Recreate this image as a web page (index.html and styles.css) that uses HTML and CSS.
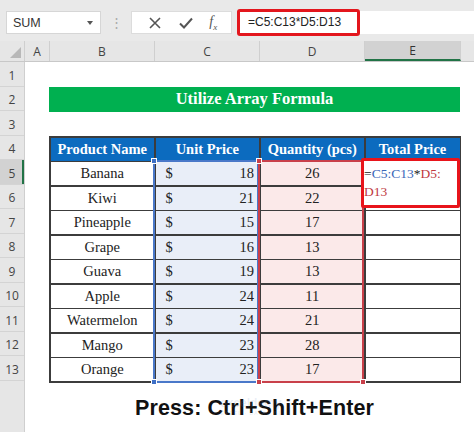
FILE: index.html
```html
<!DOCTYPE html>
<html>
<head>
<meta charset="utf-8">
<link rel="stylesheet" href="styles.css">
</head>
<body>
<div class="app">
  <div class="toolbar">
    <div class="namebox"><span>SUM</span><span class="caret"></span></div>
    <div class="dots">⋮</div>
    <div class="fxbox">
      <svg class="ico" width="14" height="14" viewBox="0 0 14 14"><path d="M2 2 L12 12 M12 2 L2 12" stroke="#555" stroke-width="1.6" fill="none"/></svg>
      <svg class="ico" width="16" height="14" viewBox="0 0 16 14"><path d="M2 7.5 L6 11.5 L14 2.5" stroke="#555" stroke-width="2" fill="none"/></svg>
      <span class="fx">f<sub>x</sub></span>
    </div>
    <div class="formula"><span class="ftext">=C5:C13*D5:D13</span></div>
  </div>
  <div class="colheads">
    <div class="corner"><span class="tri"></span></div>
    <div class="ch w-a">A</div>
    <div class="ch w-b">B</div>
    <div class="ch w-c">C</div>
    <div class="ch w-c">D</div>
    <div class="ch w-e sel">E</div>
    <div class="ch rest"></div>
  </div>
  <div class="body">
    <div class="rowheads">
      <div class="rh">1</div><div class="rh">2</div><div class="rh">3</div><div class="rh">4</div>
      <div class="rh sel">5</div><div class="rh">6</div><div class="rh">7</div><div class="rh">8</div>
      <div class="rh">9</div><div class="rh">10</div><div class="rh">11</div><div class="rh">12</div>
      <div class="rh">13</div><div class="rh-rest"></div>
    </div>
    <div class="cells">
      <div class="spacer"></div>
      <div class="title">Utilize Array Formula</div>
      <div class="spacer"></div>
      <div class="tablewrap">
        <div class="table">
          <div class="th">Product Name</div><div class="th">Unit Price</div><div class="th">Quantity (pcs)</div><div class="th">Total Price</div>

          <div class="td">Banana</div><div class="td c"><span>$</span><span>18</span></div><div class="td d">26</div><div class="td e"></div>
          <div class="td">Kiwi</div><div class="td c"><span>$</span><span>21</span></div><div class="td d">22</div><div class="td e"></div>
          <div class="td">Pineapple</div><div class="td c"><span>$</span><span>15</span></div><div class="td d">17</div><div class="td e"></div>
          <div class="td">Grape</div><div class="td c"><span>$</span><span>16</span></div><div class="td d">13</div><div class="td e"></div>
          <div class="td">Guava</div><div class="td c"><span>$</span><span>19</span></div><div class="td d">13</div><div class="td e"></div>
          <div class="td">Apple</div><div class="td c"><span>$</span><span>24</span></div><div class="td d">11</div><div class="td e"></div>
          <div class="td">Watermelon</div><div class="td c"><span>$</span><span>24</span></div><div class="td d">21</div><div class="td e"></div>
          <div class="td">Mango</div><div class="td c"><span>$</span><span>23</span></div><div class="td d">28</div><div class="td e"></div>
          <div class="td">Orange</div><div class="td c"><span>$</span><span>23</span></div><div class="td d">17</div><div class="td e"></div>
        </div>
        <div class="selbox blue"><i class="h tl"></i><i class="h bl"></i></div>
        <div class="selbox red"><i class="h tl"></i><i class="h bl"></i><i class="h br"></i></div>
        <div class="editbox"><span class="k">=</span><span class="b">C5:C13</span><span class="k">*</span><span class="r">D5:</span><br><span class="r">D13</span></div>
      </div>
      <div class="press">Press: Ctrl+Shift+Enter</div>
      <div class="watermark">exceldemy<small>EXCEL · DATA · BI</small></div>
    </div>
  </div>
</div>
</body>
</html>
```

FILE: styles.css
```css
* { box-sizing: border-box; }
html, body { margin: 0; padding: 0; }
body { width: 474px; height: 432px; overflow: hidden; background: #fff; font-family: "Liberation Sans", Arial, sans-serif; }
.app { width: 474px; height: 432px; display: flex; flex-direction: column; }

.toolbar { height: 41px; background: #e9e9e9; display: flex; align-items: flex-start; padding-top: 11px; padding-left: 6px; }
.namebox { width: 95px; height: 23px; background: #fff; border: 1px solid #d6d6d6; display: flex; align-items: center; justify-content: space-between; padding: 0 7px 0 6px; font-size: 12.5px; color: #333; }
.caret { width: 0; height: 0; border-left: 3.5px solid transparent; border-right: 3.5px solid transparent; border-top: 4px solid #555; }
.dots { width: 30px; text-align: center; color: #a8a8a8; font-size: 13px; line-height: 23px; }
.fxbox { width: 101px; height: 23px; background: #fff; border: 1px solid #dcdcdc; display: flex; align-items: center; justify-content: space-around; padding: 0 6px 0 8px; }
.fx { font-family: "Liberation Serif", serif; font-style: italic; font-size: 14px; color: #555; }
.fx sub { font-size: 9px; }
.formula { flex: 1; margin-left: 6px; height: 23px; background: #fff; position: relative; }
.ftext { position: absolute; left: -1px; top: -2px; width: 123px; height: 27px; border: 3px solid #e3161d; border-radius: 3px; font-size: 12px; color: #222; line-height: 21px; padding-left: 8px; }

.colheads { height: 21px; display: flex; background: #e6e6e6; border-bottom: 1px solid #c8c8c8; }
.corner { width: 25px; border-right: 1px solid #cfcfcf; position: relative; }
.tri { position: absolute; right: 3px; bottom: 3px; width: 0; height: 0; border-left: 11px solid transparent; border-bottom: 11px solid #b8b8b8; }
.ch { border-right: 1px solid #cfcfcf; font-family: "Open Sans", sans-serif; font-size: 12px; color: #444; display: flex; align-items: center; justify-content: center; }
.w-a { width: 25px; }
.w-b { width: 105px; }
.w-c { width: 105px; }
.w-e { width: 96px; }
.ch.sel { background: #d2d2d2; border-bottom: 2px solid #217346; color: #333; }
.ch.rest { flex: 1; border-right: none; }

.body { flex: 1; display: flex; }
.rowheads { width: 25px; display: flex; flex-direction: column; background: #e6e6e6; border-right: 1px solid #cfcfcf; }
.rh { height: 24.5px; border-bottom: 1px solid #d4d4d4; font-family: "Open Sans", sans-serif; font-size: 12px; color: #444; display: flex; align-items: center; justify-content: center; padding-top: 3px; }
.rh.sel { background: #d2d2d2; box-shadow: inset -2px 0 0 #217346; }
.rh-rest { flex: 1; }

.cells { flex: 1; position: relative; padding-left: 24px; }
.spacer { height: 24.5px; }
.title { width: 411px; height: 25px; background: #00b050; color: #fff; font-family: "Liberation Serif", serif; font-weight: bold; font-size: 16.5px; display: flex; align-items: center; justify-content: center; }

.tablewrap { position: relative; width: 412px; }
.table { display: grid; grid-template-columns: 103.5px 103.5px 103.5px 94px; grid-auto-rows: 23px; gap: 1.5px; padding: 1.5px; background: #3c3c3c; }
.th { background: #0c6bbf; color: #fff; font-family: "Liberation Serif", serif; font-weight: bold; font-size: 14.5px; display: flex; align-items: center; justify-content: center; }
.td { background: #fff; font-family: "Liberation Serif", serif; font-size: 14.5px; color: #222; display: flex; align-items: center; justify-content: center; }
.td.c { background: #e9eef8; justify-content: space-between; padding: 0 5px 0 10px; }
.td.d { background: #fbe9e9; }

.selbox { position: absolute; top: 23.5px; height: 223px; border: 2px solid; }
.selbox.blue { left: 104px; width: 106px; border-color: #4a78c9; }
.selbox.red { left: 208.5px; width: 106px; border-color: #c9404a; }
.h { position: absolute; width: 6px; height: 6px; background: inherit; }
.selbox.blue .h { background: #3d6fc6; border: 1px solid #fff; }
.selbox.red .h { background: #c9404a; border: 1px solid #fff; }
.h.tl { left: -4px; top: -4px; }
.h.bl { left: -4px; bottom: -4px; }
.h.br { right: -4px; bottom: -4px; }

.editbox { position: absolute; left: 312px; top: 22px; width: 99px; height: 50px; border: 3px solid #e8141b; border-radius: 2px; background: #fff; font-family: "Liberation Serif", serif; font-size: 13.5px; line-height: 18px; padding: 4px 0 0 0; white-space: nowrap; }
.editbox .k { color: #222; }
.editbox .b { color: #3a66b8; }
.editbox .r { color: #c0393f; }

.press { margin-top: 13px; width: 411px; text-align: center; font-weight: bold; font-size: 21.5px; color: #111; letter-spacing: 0.1px; }
.watermark { position: absolute; left: 195px; top: 336px; color: rgba(120,150,200,0.16); font-size: 12px; font-weight: bold; display: flex; flex-direction: column; align-items: center; line-height: 10px; }
.watermark small { font-size: 5px; letter-spacing: 1px; }
```
